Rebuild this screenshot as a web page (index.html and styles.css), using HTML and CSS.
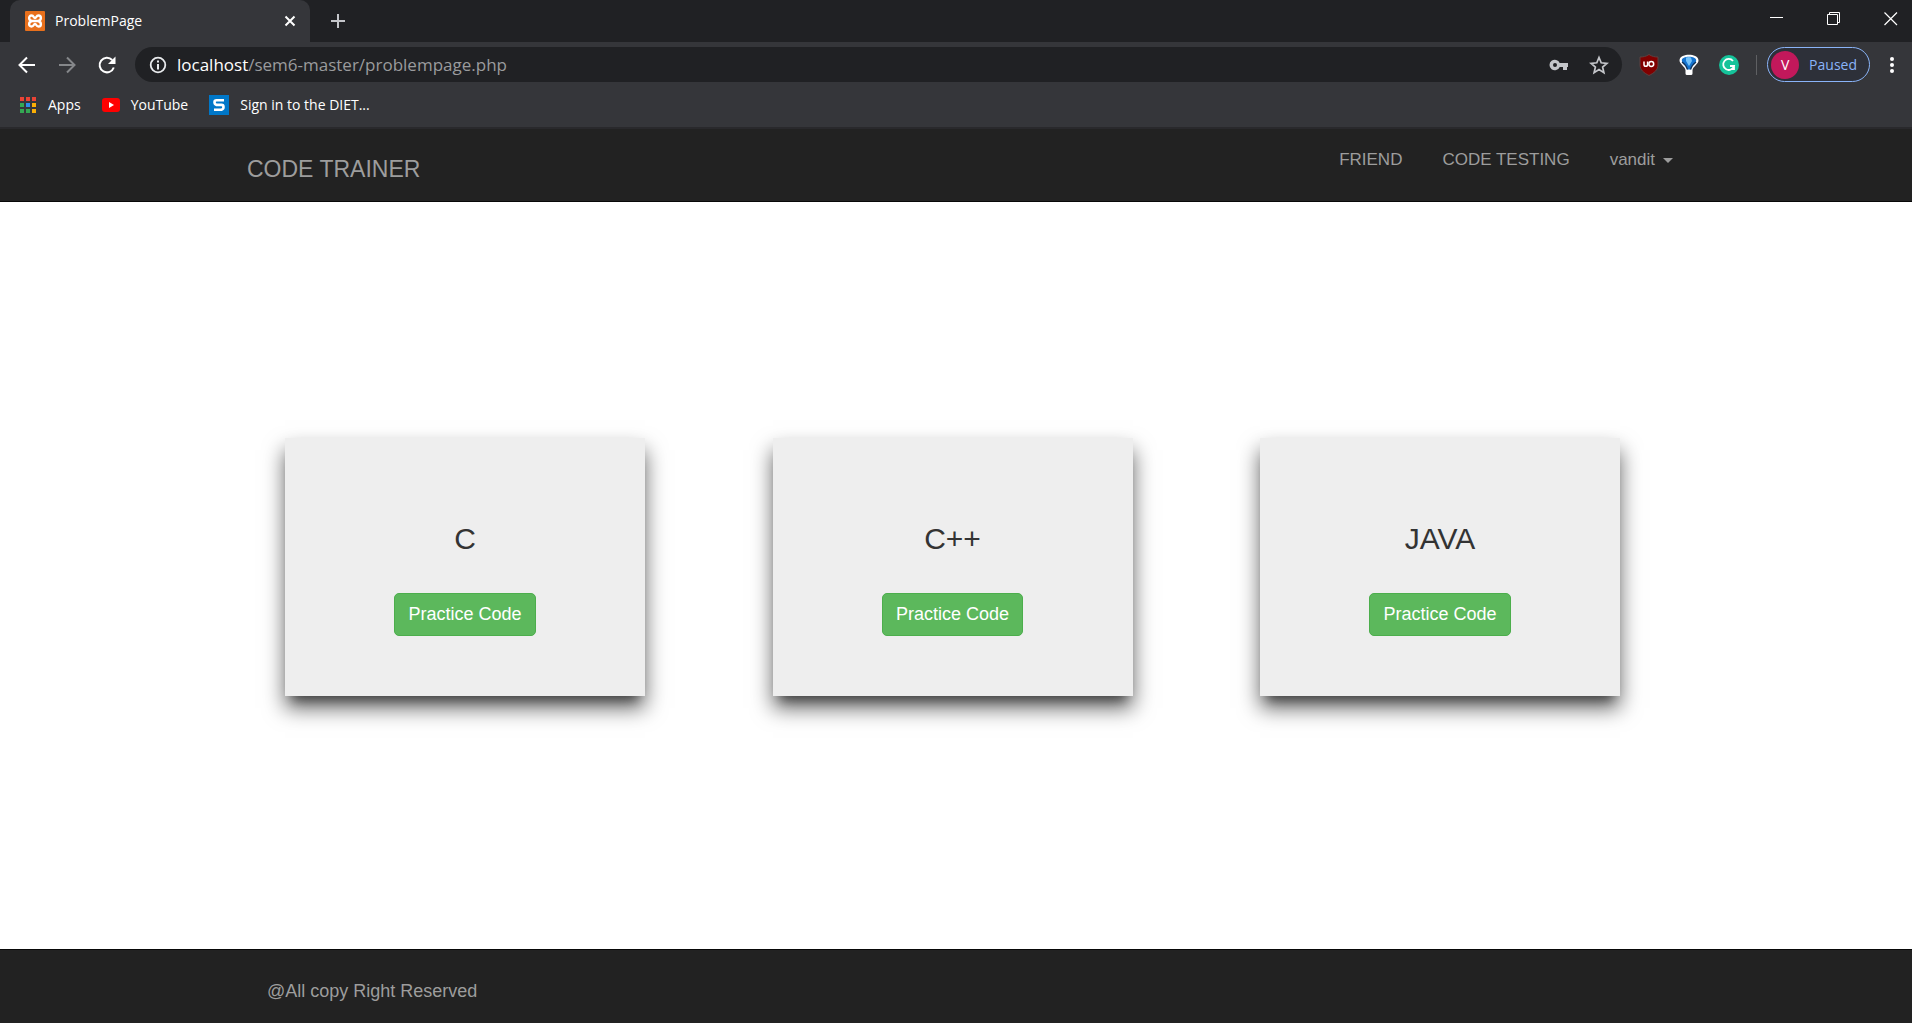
FILE: index.html
```html
<!DOCTYPE html>
<html lang="en">
<head>
<meta charset="utf-8">
<title>ProblemPage</title>
<link rel="stylesheet" href="styles.css">
</head>
<body>
<div class="browser">
  <div class="tab-strip">
    <div class="tab">
      <svg class="favicon" width="20" height="20" viewBox="0 0 20 20"><rect width="20" height="20" rx="1" fill="#e8701c"/><path d="M7 10C3 9 3.500 4.500 6.500 4.500C9 4.500 8.500 7 10 7S11 4.500 13.500 4.500C16.500 4.500 17 9 13 10C17 11 16.500 15.500 13.500 15.500C11 15.500 11.500 13 10 13S9 15.500 6.500 15.500C3.500 15.500 3 11 7 10ZM7 10H13" fill="none" stroke="#fff" stroke-width="2.400"/></svg>
      <span class="tab-title">ProblemPage</span>
      <button class="icon-button" aria-label="Close tab"><svg width="12" height="12" viewBox="0 0 12 12"><path d="M1.500 1.500l9 9M10.500 1.500l-9 9" stroke="#fff" stroke-width="2"/></svg></button>
    </div>
    <button class="icon-button new-tab" aria-label="New tab"><svg width="16" height="16" viewBox="0 0 16 16"><path d="M8 1v14M1 8h14" stroke="#c4c6ca" stroke-width="2"/></svg></button>
    <div class="window-buttons">
      <button class="icon-button" aria-label="Minimize"><svg width="14" height="14" viewBox="0 0 14 14"><path d="M0 5.500h13" stroke="#fff"/></svg></button>
      <button class="icon-button" aria-label="Restore"><svg width="14" height="14" viewBox="0 0 14 14"><path d="M.5 2.500h10v10H.5zM2.500 2.500v-2h10v10h-2" fill="none" stroke="#fff"/></svg></button>
      <button class="icon-button" aria-label="Close"><svg width="14" height="14" viewBox="0 0 14 14"><path d="M.5 .5l12.500 12.500M13 .5L.5 13" stroke="#fff" stroke-width="1.200"/></svg></button>
    </div>
  </div>
  <div class="toolbar">
    <button class="icon-button" aria-label="Back"><svg width="20" height="20" viewBox="0 0 20 20"><path d="M18 10H3M10 2.500L2.500 10l7.500 7.500" fill="none" stroke="#fff" stroke-width="2"/></svg></button>
    <button class="icon-button" aria-label="Forward"><svg width="20" height="20" viewBox="0 0 20 20"><path d="M2 10h15M10 2.500l7.500 7.500-7.500 7.500" fill="none" stroke="#85878a" stroke-width="2"/></svg></button>
    <button class="icon-button" aria-label="Reload"><svg width="20" height="20" viewBox="0 0 20 20"><path d="M16.800 12.500A7.300 7.300 0 1 1 15.200 5" fill="none" stroke="#fff" stroke-width="2"/><path d="M18.500 1.500v7.500H11z" fill="#fff"/></svg></button>
    <div class="address">
      <svg width="18" height="18" viewBox="0 0 18 18"><circle cx="9" cy="9" r="7.300" fill="none" stroke="#e8eaed" stroke-width="1.800"/><path d="M9 4.500v2M9 8v5.500" stroke="#e8eaed" stroke-width="2"/></svg>
      <div class="url"><span class="host">localhost</span>/sem6-master/problempage.php</div>
      <button class="icon-button" aria-label="Passwords"><svg width="20" height="20" viewBox="0 0 20 20"><path d="M10.700 8A5.300 5.300 0 1 0 10.700 12H14v3h4v-3h1V8zM6 12a2 2 0 1 1 0-4 2 2 0 0 1 0 4z" fill="#c4c6ca"/></svg></button>
      <button class="icon-button" aria-label="Bookmark"><svg width="20" height="20" viewBox="0 0 20 20"><path d="M10 2.500l2.200 5.300 5.700.5-4.300 3.700 1.300 5.600-4.900-3-4.900 3 1.300-5.600-4.300-3.700 5.700-.5z" fill="none" stroke="#c4c6ca" stroke-width="1.700"/></svg></button>
    </div>
    <div class="extensions">
      <svg width="20" height="22" viewBox="0 0 20 22"><path d="M10 .5C7 2.500 4 3 1 3v8c0 5 4 8 9 10.500C15 19 19 16 19 11V3c-3 0-6-.5-9-2.500z" fill="#800000" stroke="#5d4040"/><path d="M5 7.500v3a1.800 1.800 0 0 0 3.600 0v-3" fill="none" stroke="#fff" stroke-width="1.500"/><circle cx="12.300" cy="10" r="2.400" fill="none" stroke="#fff" stroke-width="1.500"/></svg>
      <svg width="20" height="22" viewBox="0 0 20 22"><path d="M10 .8C6 .8 .5 2.300 .5 6.500C.5 10 6 12.500 6.500 16V19.500q0 1.500 1.500 1.500h4q1.500 0 1.500-1.500V16C14 12.500 19.500 10 19.500 6.500C19.500 2.300 14 .8 10 .8z" fill="#fff"/><path d="M10 2.800C6 2.800 2.800 4 2.800 6.500C2.800 9 7.500 11.500 8.300 15.500h3.400C12.500 11.500 17.200 9 17.200 6.500C17.200 4 14 2.800 10 2.800z" fill="#1473cf"/><path d="M7 3.500q3-1 5 0l1 3.500-3 5-3-5z" fill="#73c2fa"/><path d="M3 8Q7.500 11.500 8.500 15.500M17 8Q12.500 11.500 11.500 15.500" fill="none" stroke="#12345b" stroke-width="1.300"/></svg>
      <svg width="20" height="20" viewBox="0 0 20 20"><circle cx="10" cy="10" r="10" fill="#15c39a"/><path d="M14 6A5.500 5.500 0 1 0 15 11H11M15 11v4" fill="none" stroke="#fff" stroke-width="1.800"/></svg>
    </div>
    <button class="profile"><span class="avatar">V</span>Paused</button>
    <button class="icon-button" aria-label="Menu"><svg width="16" height="20" viewBox="0 0 16 20"><g fill="#fff"><circle cx="8" cy="4" r="2"/><circle cx="8" cy="10" r="2"/><circle cx="8" cy="16" r="2"/></g></svg></button>
  </div>
  <div class="bookmarks">
    <a href="#"><svg width="18" height="18" viewBox="0 0 18 18"><path d="M1 1h4v4H1zM7 1h4v4H7zM13 1h4v4h-4z" fill="#ea4335"/><path d="M1 7h4v4H1zM1 13h4v4H1zM7 13h4v4H7z" fill="#34a853"/><path d="M7 7h4v4H7z" fill="#2d8ceb"/><path d="M13 7h4v4h-4zM13 13h4v4h-4z" fill="#fbaf05"/></svg>Apps</a>
    <a href="#"><svg width="18" height="14" viewBox="0 0 18 14"><rect width="18" height="14" rx="3" fill="#f00"/><path d="M7 4l5 3-5 3z" fill="#fff"/></svg>YouTube</a>
    <a href="#"><svg width="20" height="20" viewBox="0 0 20 20"><path d="M0 0h20v20H0z" fill="#0077c8"/><path d="M15 5.300H7.500Q5.500 5.300 5.500 7.300T7.500 9.900H12.500Q14.500 9.900 14.500 12T12.500 14.700H5" fill="none" stroke="#fff" stroke-width="2.600"/></svg>Sign in to the DIET...</a>
  </div>
</div>
<div class="page">
  <header class="navbar">
    <div class="container nav-row">
      <a class="brand" href="#">CODE TRAINER</a>
      <nav class="nav-links">
        <a href="#">FRIEND</a>
        <a href="#">CODE TESTING</a>
        <a href="#">vandit<span class="caret"></span></a>
      </nav>
    </div>
  </header>
  <main class="main">
    <div class="container cards">
      <section class="card"><h2>C</h2><button class="practice">Practice Code</button></section>
      <section class="card"><h2>C++</h2><button class="practice">Practice Code</button></section>
      <section class="card"><h2>JAVA</h2><button class="practice">Practice Code</button></section>
    </div>
  </main>
  <footer class="footer"><p class="container copyright">@All copy Right Reserved</p></footer>
</div>
</body>
</html>
```
FILE: styles.css
```css
* { box-sizing: border-box; }
body {
  display: flex;
  flex-direction: column;
  min-height: 100vh;
  margin: 0;
  background: #fff;
  font: 18px/26px "Liberation Sans", Arial, sans-serif;
}
a { color: inherit; text-decoration: none; }
button { font: inherit; cursor: pointer; }
svg { display: block; flex: none; }

/* Browser frame */
.browser {
  background: #35363a;
  border-bottom: 2px solid #29292c;
  color: #fff;
  font: 14px/20px "Open Sans", "Noto Sans", sans-serif;
}
.icon-button {
  display: flex;
  padding: 0;
  border: 0;
  background: none;
}
.tab-strip {
  display: flex;
  height: 42px;
  padding-left: 10px;
  background: #202124;
}
.tab {
  display: flex;
  align-items: center;
  gap: 10px;
  width: 300px;
  padding: 0 14px 0 15px;
  border-radius: 10px 10px 0 0;
  background: #35363a;
}
.tab-title { flex: 1; }
.new-tab { align-items: center; margin-left: 20px; }
.window-buttons {
  display: flex;
  gap: 43px;
  margin: 12px 14px 0 auto;
}
.toolbar {
  display: flex;
  align-items: center;
  height: 45px;
  padding: 0 12px 0 17px;
  gap: 20px;
}
.address {
  display: flex;
  flex: 1;
  align-items: center;
  gap: 20px;
  height: 35px;
  margin-left: -2px;
  padding: 0 13px 0 14px;
  border-radius: 18px;
  background: #202124;
}
.url { flex: 1; margin-left: -10px; color: #9a9b9d; font-size: 17px; }
.host { color: #fff; }
.extensions {
  display: flex;
  align-items: center;
  gap: 20px;
  height: 20px;
  margin-left: -3px;
  padding-right: 17px;
  border-right: 1px solid #5f6063;
}
.profile {
  display: flex;
  align-items: center;
  gap: 10px;
  height: 35px;
  margin: 0 -6px 0 -10px;
  padding: 0 12px 0 3px;
  border: 1px solid #8ab4f8;
  border-radius: 18px;
  background: #2d3039;
  color: #8ab4f8;
}
.avatar {
  width: 28px;
  border-radius: 50%;
  background: #c2185b;
  color: #fff;
  line-height: 28px;
  text-align: center;
}
.bookmarks {
  display: flex;
  gap: 21px;
  height: 40px;
  padding: 0 19px;
}
.bookmarks a { display: flex; align-items: center; gap: 11px; height: 36px; }

/* Site */
.page {
  display: flex;
  flex: 1;
  flex-direction: column;
}
.container {
  width: 100%;
  max-width: 1462px;
  margin: 0 auto;
  padding: 0 18px;
}
.navbar, .footer, .main { padding-left: 8px; }
.navbar, .footer { background: #222; color: #9d9d9d; }
.navbar { height: 73px; border-bottom: 1px solid #080808; }
.nav-row { display: flex; justify-content: space-between; }
.brand { padding-top: 27px; font-size: 23px; }
.nav-links { display: flex; gap: 40px; padding-top: 18px; font-size: 17px; }
.caret {
  display: inline-block;
  margin-left: 8px;
  border: 5px solid transparent;
  border-top-color: currentColor;
  border-bottom: 0;
  vertical-align: middle;
}
.main { display: flex; flex: 1; align-items: center; }
.cards {
  display: flex;
  justify-content: space-between;
  padding: 0 71px 18px 56px;
}
.card {
  display: flex;
  flex-direction: column;
  align-items: center;
  gap: 34px;
  width: 360px;
  padding: 81px 20px 60px;
  background: #eee;
  box-shadow: 0 12px 10px -8px #0006, 0 12px 20px #0009;
}
.card h2 {
  margin: 0;
  color: #333;
  font-size: 30px;
  font-weight: 400;
  line-height: 40px;
}
.practice {
  padding: 8px 13px 9px;
  border: 1px solid #4cae4c;
  border-radius: 5px;
  background: #5cb85c;
  color: #fff;
  line-height: 24px;
}
.footer { height: 74px; border-top: 1px solid #080808; }
.copyright { padding: 28px 38px 0; }
```
